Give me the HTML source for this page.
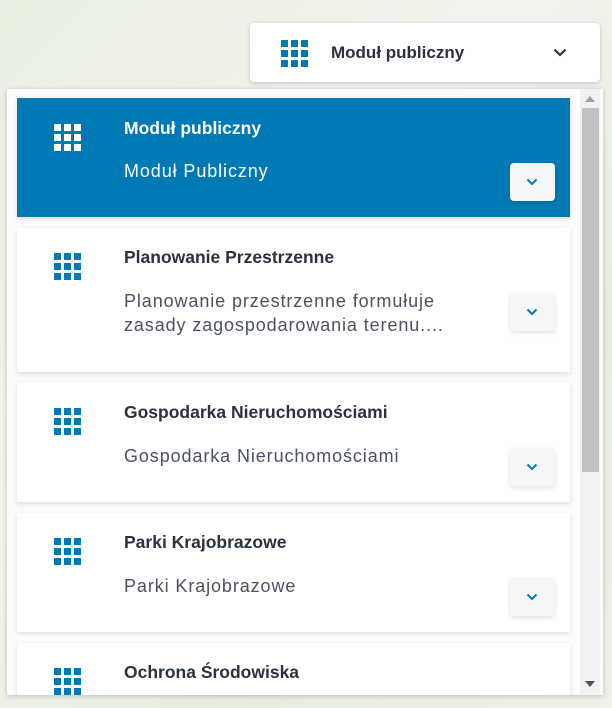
<!DOCTYPE html>
<html><head><meta charset="utf-8"><style>
html{overflow:hidden;}
body{margin:0;width:612px;height:708px;overflow:hidden;position:relative;font-family:"Liberation Sans",sans-serif;
background:linear-gradient(135deg,#e9efe2 0%,#f2f2ec 40%,#e6eedf 70%,#f0efe8 100%);}
.top{position:absolute;left:250px;top:23px;width:350px;height:59px;background:#fff;border-radius:4px;box-shadow:0 1px 4px rgba(0,0,0,.2);}
.top .t{position:absolute;left:81px;top:20px;font-size:17px;font-weight:bold;color:#2a3240;}
.panel{position:absolute;left:7px;top:89px;width:596px;height:606px;background:#fcfcfd;box-shadow:0 1px 5px rgba(0,0,0,.2);overflow:hidden;}
.sb{position:absolute;left:573px;top:0;width:20px;height:606px;background:#f1f1f1;}
.thumb{position:absolute;left:2px;top:19px;width:17px;height:364px;background:#c1c1c1;}
.card{position:absolute;left:10px;width:553px;background:#fff;box-shadow:0 2px 5px rgba(0,0,0,.12);}
.card.a{background:#0079b5;}
.ic{position:absolute;left:37px;width:27px;height:27px;}
.ic i{position:absolute;width:7px;height:7px;background:#0079b5;}
.a .ic i{background:#fff;}
.ti{position:absolute;left:107px;font-size:17.5px;font-weight:bold;color:#2a3240;}
.a .ti,.a .su{color:#fff;}
.su{position:absolute;left:107px;font-size:18px;letter-spacing:0.9px;color:#4a5260;line-height:24px;}
.btn{position:absolute;left:493px;width:45px;height:38px;background:#f5f6f8;border-radius:4px;box-shadow:0 2px 5px rgba(0,0,0,.12);}
.btn svg{position:absolute;left:16px;top:15px;}
</style></head><body>
<div class="top">
<div class="ic" style="left:31px;top:17px"><i style="left:0;top:0"></i><i style="left:10px;top:0"></i><i style="left:20px;top:0"></i><i style="left:0;top:10px"></i><i style="left:10px;top:10px"></i><i style="left:20px;top:10px"></i><i style="left:0;top:20px"></i><i style="left:10px;top:20px"></i><i style="left:20px;top:20px"></i></div>
<div class="t">Moduł publiczny</div>
<svg style="position:absolute;left:303px;top:25px" width="14" height="9" viewBox="0 0 14 9"><path d="M1.5 1.5L7 7L12.5 1.5" stroke="#2a3240" stroke-width="2.2" fill="none"/></svg>
</div>
<div class="panel">
<div class="card a" style="top:9px;height:119px">
<div class="ic" style="top:26px"><i style="left:0;top:0"></i><i style="left:10px;top:0"></i><i style="left:20px;top:0"></i><i style="left:0;top:10px"></i><i style="left:10px;top:10px"></i><i style="left:20px;top:10px"></i><i style="left:0;top:20px"></i><i style="left:10px;top:20px"></i><i style="left:20px;top:20px"></i></div>
<div class="ti" style="top:20px">Moduł publiczny</div>
<div class="su" style="top:61px">Moduł Publiczny</div>
<div class="btn" style="top:65px"><svg width="12" height="8" viewBox="0 0 12 8"><path d="M1.5 1.5L6 6L10.5 1.5" stroke="#0079b5" stroke-width="2" fill="none"/></svg></div>
</div>
<div class="card" style="top:139px;height:144px">
<div class="ic" style="top:25px"><i style="left:0;top:0"></i><i style="left:10px;top:0"></i><i style="left:20px;top:0"></i><i style="left:0;top:10px"></i><i style="left:10px;top:10px"></i><i style="left:20px;top:10px"></i><i style="left:0;top:20px"></i><i style="left:10px;top:20px"></i><i style="left:20px;top:20px"></i></div>
<div class="ti" style="top:19px">Planowanie Przestrzenne</div>
<div class="su" style="top:61px">Planowanie przestrzenne formułuje<br>zasady zagospodarowania terenu....</div>
<div class="btn" style="top:65px"><svg width="12" height="8" viewBox="0 0 12 8"><path d="M1.5 1.5L6 6L10.5 1.5" stroke="#0079b5" stroke-width="2" fill="none"/></svg></div>
</div>
<div class="card" style="top:294px;height:119px">
<div class="ic" style="top:25px"><i style="left:0;top:0"></i><i style="left:10px;top:0"></i><i style="left:20px;top:0"></i><i style="left:0;top:10px"></i><i style="left:10px;top:10px"></i><i style="left:20px;top:10px"></i><i style="left:0;top:20px"></i><i style="left:10px;top:20px"></i><i style="left:20px;top:20px"></i></div>
<div class="ti" style="top:19px">Gospodarka Nieruchomościami</div>
<div class="su" style="top:61px">Gospodarka Nieruchomościami</div>
<div class="btn" style="top:65px"><svg width="12" height="8" viewBox="0 0 12 8"><path d="M1.5 1.5L6 6L10.5 1.5" stroke="#0079b5" stroke-width="2" fill="none"/></svg></div>
</div>
<div class="card" style="top:424px;height:119px">
<div class="ic" style="top:25px"><i style="left:0;top:0"></i><i style="left:10px;top:0"></i><i style="left:20px;top:0"></i><i style="left:0;top:10px"></i><i style="left:10px;top:10px"></i><i style="left:20px;top:10px"></i><i style="left:0;top:20px"></i><i style="left:10px;top:20px"></i><i style="left:20px;top:20px"></i></div>
<div class="ti" style="top:19px">Parki Krajobrazowe</div>
<div class="su" style="top:61px">Parki Krajobrazowe</div>
<div class="btn" style="top:65px"><svg width="12" height="8" viewBox="0 0 12 8"><path d="M1.5 1.5L6 6L10.5 1.5" stroke="#0079b5" stroke-width="2" fill="none"/></svg></div>
</div>
<div class="card" style="top:554px;height:52px">
<div class="ic" style="top:25px"><i style="left:0;top:0"></i><i style="left:10px;top:0"></i><i style="left:20px;top:0"></i><i style="left:0;top:10px"></i><i style="left:10px;top:10px"></i><i style="left:20px;top:10px"></i><i style="left:0;top:20px"></i><i style="left:10px;top:20px"></i><i style="left:20px;top:20px"></i></div>
<div class="ti" style="top:19px">Ochrona Środowiska</div>
</div>
<div class="sb"><div class="thumb"></div>
<svg style="position:absolute;left:5px;top:7px" width="10" height="6"><path d="M0 6L5 0L10 6Z" fill="#a0a0a0"/></svg>
<svg style="position:absolute;left:5px;top:592px" width="10" height="6"><path d="M0 0L5 6L10 0Z" fill="#505050"/></svg>
</div>
</div>
</body></html>
